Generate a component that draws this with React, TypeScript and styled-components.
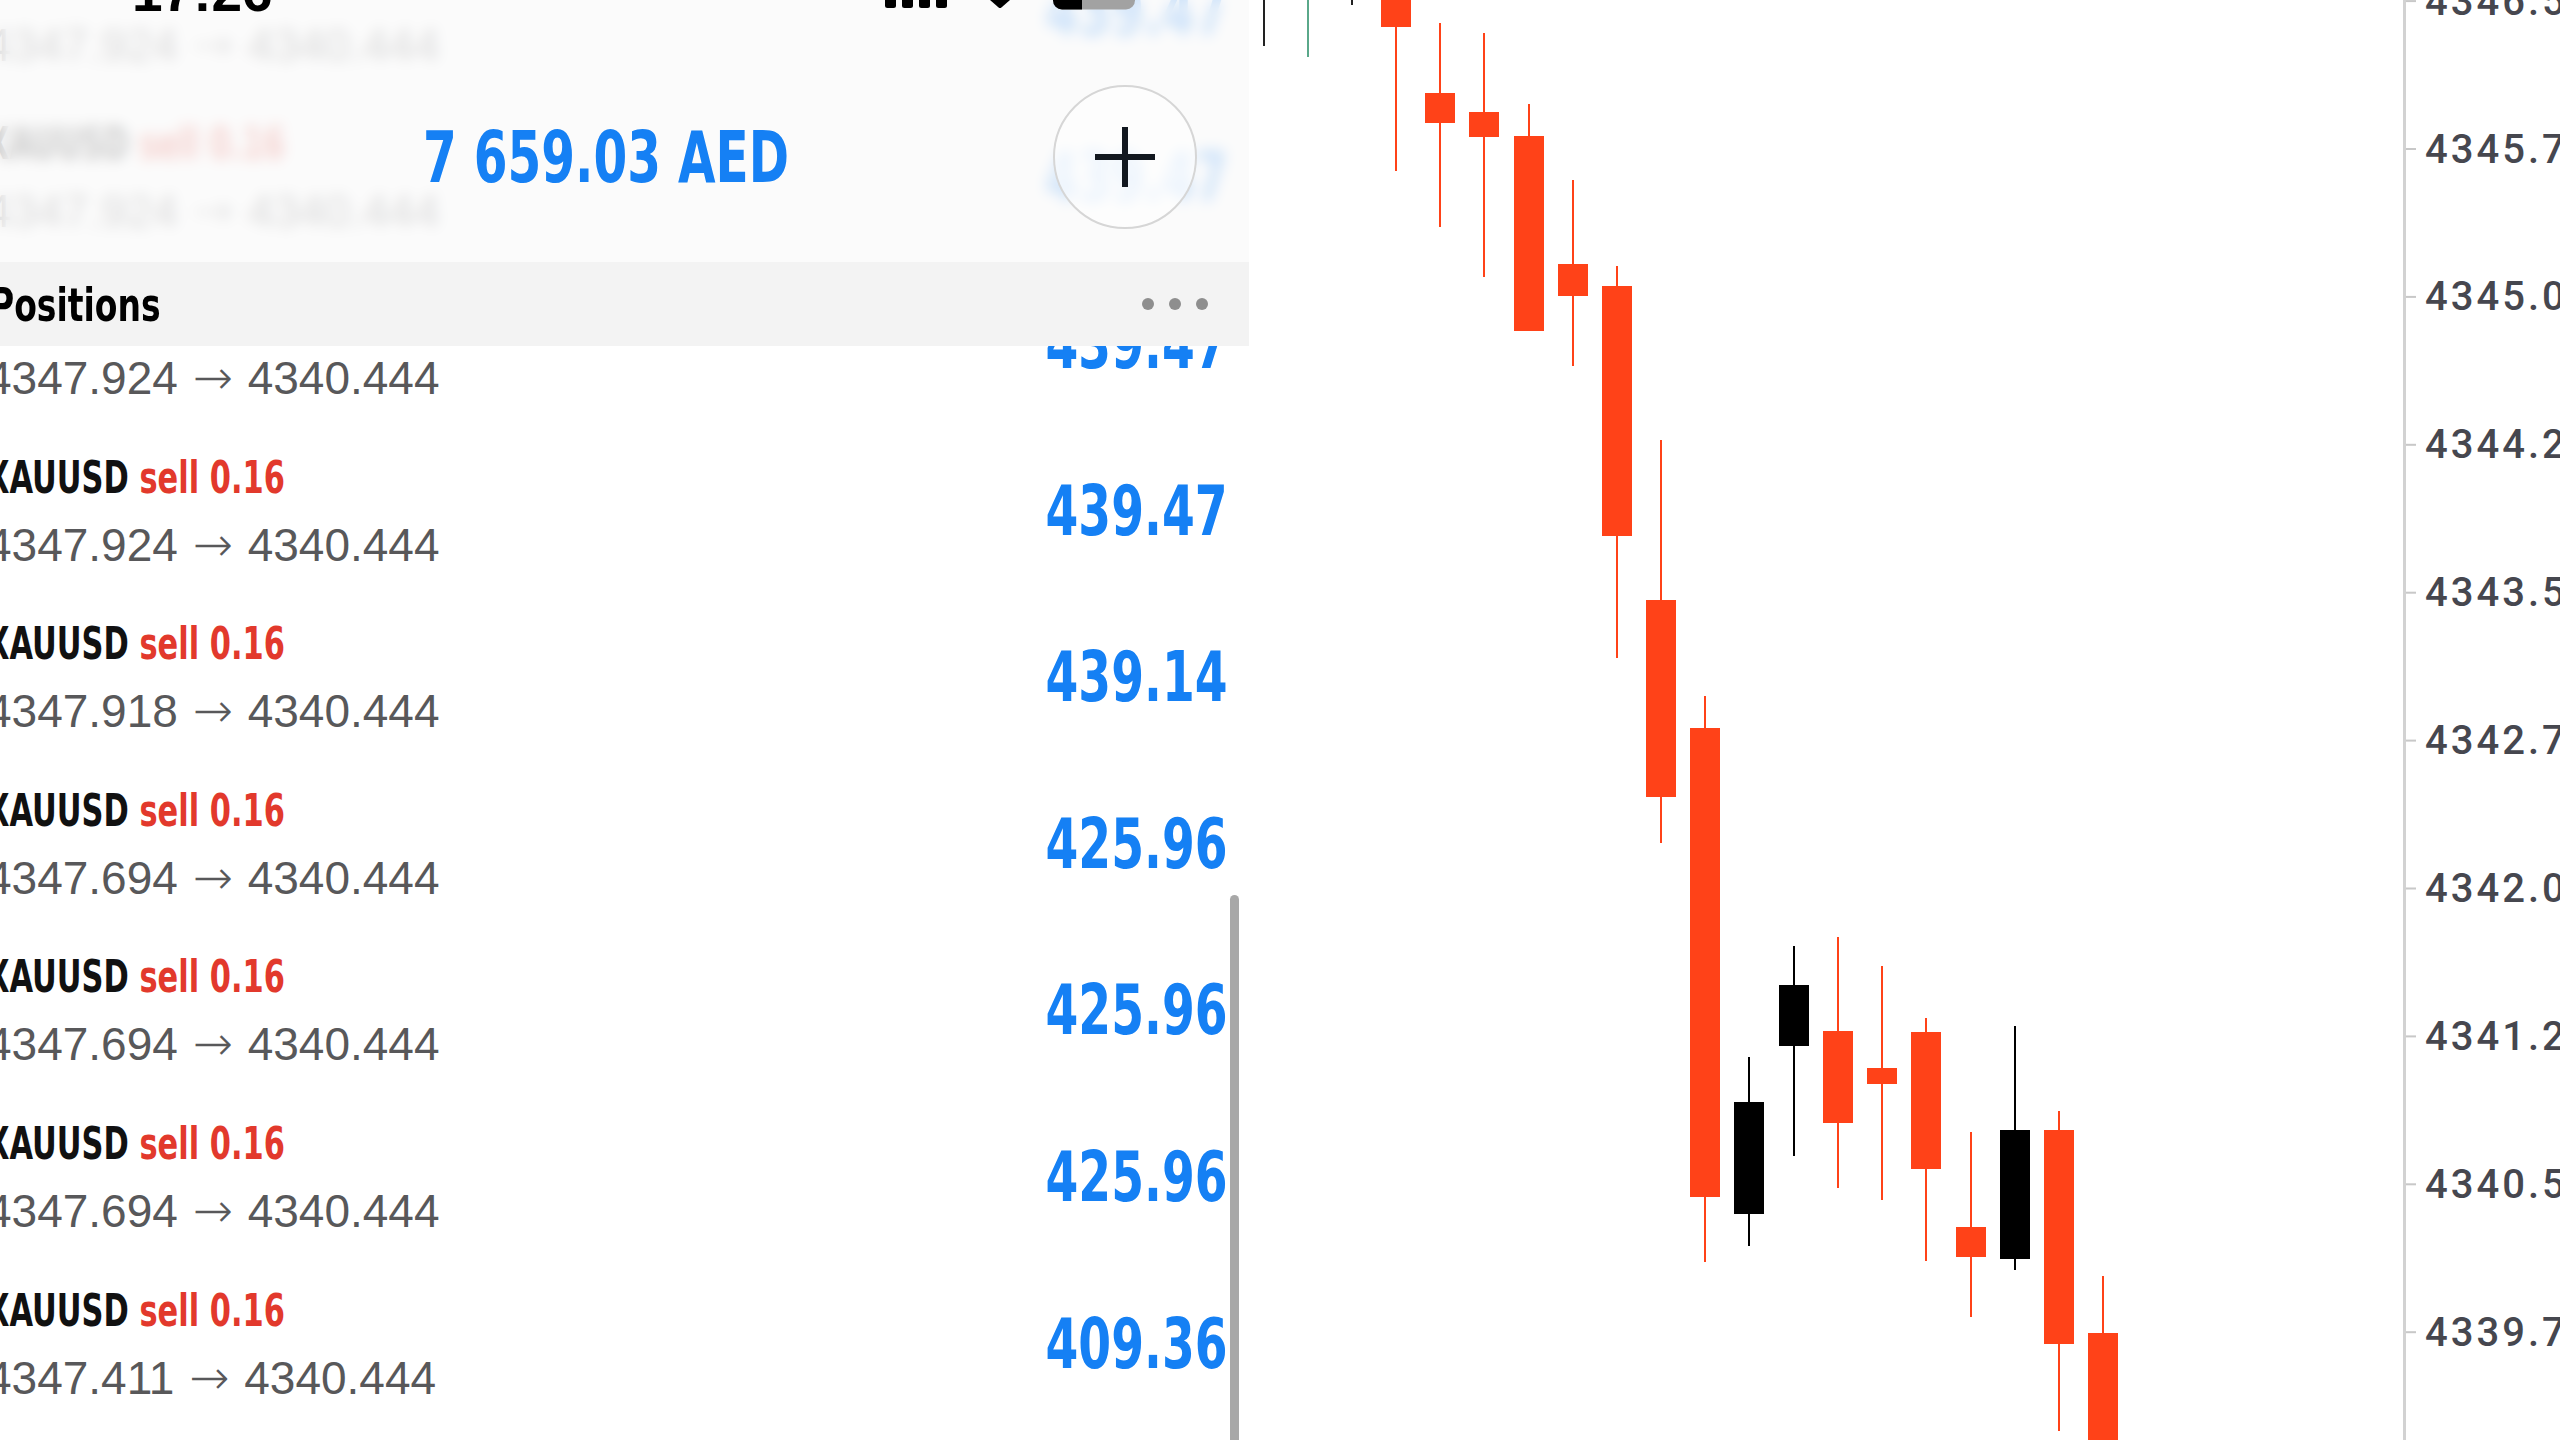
import { useLayoutEffect, useRef } from "react";
import styled, { createGlobalStyle } from "styled-components";

// the app's condensed demi-bold face: nearest installed face, narrowed
const CONDENSED = `"DejaVu Sans Condensed", "DejaVu Sans", sans-serif`;

const GlobalStyle = createGlobalStyle`
  html, body {
    margin: 0;
    padding: 0;
    background: #fff;
  }
  body {
    width: 2560px;
    height: 1440px;
    overflow: hidden;
    font-family: "Liberation Sans", Arial, sans-serif;
  }
`;

type Position = { open: string; profit: string };

const positions: Position[] = [
  { open: "4347.924", profit: "439.47" },
  { open: "4347.924", profit: "439.47" },
  { open: "4347.924", profit: "439.47" },
  { open: "4347.924", profit: "439.47" },
  { open: "4347.918", profit: "439.14" },
  { open: "4347.694", profit: "425.96" },
  { open: "4347.694", profit: "425.96" },
  { open: "4347.694", profit: "425.96" },
  { open: "4347.411", profit: "409.36" },
  { open: "4347.411", profit: "409.36" },
];

// x, body top, body bottom, wick top, wick bottom, colour
type Candle = [number, number, number, number, number, string];

const RED = "#ff4218";
const candles: Candle[] = [
  [1264, -20, -10, -20, 46, "#222"],
  [1308, -20, -10, -20, 57, "#5aa88a"],
  [1352, -20, -10, -20, 5, "#222"],
  [1396, -20, 27, -20, 171, RED],
  [1440, 93, 123, 23, 227, RED],
  [1484, 112, 137, 33, 277, RED],
  [1529, 136, 331, 104, 331, RED],
  [1573, 264, 296, 180, 366, RED],
  [1617, 286, 536, 266, 658, RED],
  [1661, 600, 797, 440, 843, RED],
  [1705, 728, 1197, 696, 1262, RED],
  [1749, 1102, 1214, 1057, 1246, "#000"],
  [1794, 985, 1046, 946, 1156, "#000"],
  [1838, 1031, 1123, 937, 1188, RED],
  [1882, 1068, 1084, 966, 1200, RED],
  [1926, 1032, 1169, 1018, 1261, RED],
  [1971, 1227, 1257, 1132, 1317, RED],
  [2015, 1130, 1259, 1026, 1270, "#000"],
  [2059, 1130, 1344, 1111, 1431, RED],
  [2103, 1333, 1460, 1276, 1460, RED],
];

const axisTicks = Array.from({ length: 11 }, (_, i) => ({
  y: 1.1 + i * 147.9,
  label: (4346.5 - i * 0.75).toFixed(2),
}));

const App = () => {
  const listRef = useRef<HTMLDivElement>(null);

  useLayoutEffect(() => {
    if (listRef.current) listRef.current.scrollTop = 72;
  }, []);

  return (
    <Screen>
      <GlobalStyle />
      <PositionsPane>
        <List ref={listRef}>
          {positions.map((p, i) => (
            <Row key={i}>
              <RowText>
                <Title>
                  XAUUSD <Side>sell 0.16</Side>
                </Title>
                <Prices>
                  {p.open} <Arrow>→</Arrow> 4340.444
                </Prices>
              </RowText>
              <Profit>{p.profit}</Profit>
            </Row>
          ))}
        </List>

        <ScrollIndicator />

        <Header>
          <StatusBar>
            <Clock>17:26</Clock>
            <StatusIcons>
              <svg width="62" height="12" viewBox="0 0 62 12">
                {[0, 17, 34, 51].map((x) => (
                  <rect key={x} x={x} y={-12} width={11} height={20} rx={2.5} fill="#000" />
                ))}
              </svg>
              <svg width="42" height="12" viewBox="0 0 42 12">
                <path d="M11 0 H31 L22.4 7.4 Q21 8.6 19.6 7.4 Z" fill="#000" />
              </svg>
              <svg width="82" height="12" viewBox="0 0 82 12">
                <defs>
                  <clipPath id="batt">
                    <rect x="0" y="-30" width="82" height="39.5" rx="9" />
                  </clipPath>
                </defs>
                <g clipPath="url(#batt)">
                  <rect x="0" y="-30" width="82" height="40" fill="#a2a2a2" />
                  <rect x="0" y="-30" width="29" height="40" fill="#000" />
                </g>
              </svg>
            </StatusIcons>
          </StatusBar>

          <NavBar>
            <Balance>7 659.03 AED</Balance>
            <AddButton aria-label="New order">
              <svg width="60" height="60" viewBox="0 0 60 60">
                <rect x="0" y="27" width="60" height="6" fill="#121820" />
                <rect x="27" y="0" width="6" height="60" fill="#121820" />
              </svg>
            </AddButton>
          </NavBar>

          <SectionBar>
            <SectionTitle>Positions</SectionTitle>
            <MoreDots>
              <Dot />
              <Dot />
              <Dot />
            </MoreDots>
          </SectionBar>
        </Header>
      </PositionsPane>

      <ChartPane>
        <svg width="1311" height="1440" viewBox="1249 0 1311 1440">
          {candles.map(([x, bt, bb, wt, wb, color], i) => (
            <g key={i}>
              <rect x={x - 1} y={wt} width={2} height={wb - wt} fill={color} />
              <rect x={x - 15} y={bt} width={30} height={bb - bt} fill={color} />
            </g>
          ))}
          <rect x="2403" y="0" width="3" height="1440" fill="#d2d2d2" />
          {axisTicks.map((t) => (
            <g key={t.label}>
              <rect x="2406" y={t.y - 1} width="10" height="2" fill="#c8c8c8" />
              <AxisLabel x="2425" y={t.y} dominantBaseline="central">
                {t.label}
              </AxisLabel>
            </g>
          ))}
        </svg>
      </ChartPane>
    </Screen>
  );
};

export default App;

const Screen = styled.div`
  display: flex;
  width: 2560px;
  height: 1440px;
  overflow: hidden;
  background: #fff;
`;

const PositionsPane = styled.section`
  position: relative;
  flex: 0 0 1263px;
  margin-left: -14px;
  height: 100%;
  overflow: hidden;
  background: #fff;
`;

const List = styled.div`
  height: 100%;
  overflow-y: auto;
  scrollbar-width: none;
  &::-webkit-scrollbar {
    display: none;
  }
`;

const Row = styled.div`
  display: flex;
  align-items: center;
  justify-content: space-between;
  height: 166.6px;
  padding-right: 21px;
  box-sizing: border-box;
`;

const RowText = styled.div`
  display: flex;
  flex-direction: column;
  gap: 10px;
`;

const Title = styled.div`
  font-family: ${CONDENSED};
  font-weight: 700;
  font-size: 44px;
  line-height: 56px;
  color: #111;
  white-space: nowrap;
  transform: scaleX(0.77);
  transform-origin: left center;
`;

const Side = styled.span`
  color: #e2392c;
`;

const Prices = styled.div`
  font-family: "Liberation Sans", Arial, sans-serif;
  font-size: 46px;
  line-height: 56px;
  color: #58585a;
  white-space: nowrap;
`;

const Arrow = styled.span`
  font-family: "DejaVu Sans", sans-serif;
  font-weight: 200;
  font-size: 48px;
  margin: 0 2px;
`;

const Profit = styled.div`
  font-family: ${CONDENSED};
  font-weight: 700;
  font-size: 69px;
  line-height: 1;
  color: #1580f4;
  white-space: nowrap;
  transform: scaleX(0.76);
  transform-origin: right center;
`;

const ScrollIndicator = styled.div`
  position: absolute;
  right: 10px;
  top: 895px;
  width: 9px;
  height: 600px;
  border-radius: 5px;
  background: #a8a8a8;
`;

const Header = styled.header`
  position: absolute;
  top: 0;
  left: 0;
  right: 0;
  z-index: 2;
  display: flex;
  flex-direction: column;
  background: rgba(250, 250, 250, 0.8);
  backdrop-filter: blur(7px);
`;

const StatusBar = styled.div`
  display: flex;
  align-items: flex-end;
  height: 12px;
  overflow: hidden;
  padding: 0 114px 0 146px;
`;

const Clock = styled.span`
  font-family: "Liberation Sans", Arial, sans-serif;
  font-weight: 700;
  font-size: 55px;
  line-height: 39px;
  color: #000;
`;

const StatusIcons = styled.div`
  margin-left: auto;
  display: flex;
  align-items: flex-end;
  gap: 32px;

  svg {
    display: block;
  }
`;

const NavBar = styled.div`
  display: flex;
  align-items: center;
  justify-content: space-between;
  height: 250px;
  padding: 40px 52px 0 437px;
  box-sizing: border-box;
`;

const Balance = styled.div`
  font-family: ${CONDENSED};
  font-weight: 700;
  font-size: 71px;
  line-height: 1;
  color: #1580f4;
  white-space: nowrap;
  transform: scaleX(0.76);
  transform-origin: left center;
`;

const AddButton = styled.button`
  display: flex;
  align-items: center;
  justify-content: center;
  width: 144px;
  height: 144px;
  padding: 0;
  border: 2px solid #d6d6d6;
  border-radius: 50%;
  background: rgba(255, 255, 255, 0.6);
`;

const SectionBar = styled.div`
  display: flex;
  align-items: center;
  justify-content: space-between;
  height: 84px;
  padding: 0 41px 0 4px;
  background: #f3f3f3;
`;

const SectionTitle = styled.div`
  font-family: ${CONDENSED};
  font-weight: 700;
  font-size: 47px;
  color: #000;
  white-space: nowrap;
  transform: scaleX(0.78);
  transform-origin: left center;
`;

const MoreDots = styled.div`
  display: flex;
  gap: 15px;
`;

const Dot = styled.span`
  width: 12px;
  height: 12px;
  border-radius: 50%;
  background: #8e8e8e;
`;

const ChartPane = styled.div`
  flex: 1;
  height: 100%;
  overflow: hidden;

  svg {
    display: block;
  }
`;

const AxisLabel = styled.text`
  font-family: Roboto, "Liberation Sans", sans-serif;
  font-size: 40px;
  font-weight: 500;
  letter-spacing: 3px;
  fill: #46474f;
`;
